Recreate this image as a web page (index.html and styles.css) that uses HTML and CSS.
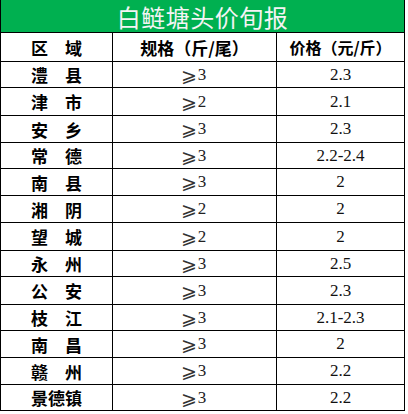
FILE: index.html
```html
<!DOCTYPE html>
<html lang="zh">
<head>
<meta charset="utf-8">
<title>白鲢塘头价旬报</title>
<link rel="stylesheet" href="styles.css">
</head>
<body>
<div class="sheet">
  <div class="title">白鲢塘头价旬报</div>
  <div class="cell head">区　域</div>
  <div class="cell head">规格（斤/尾）</div>
  <div class="cell head small">价格（元/斤）</div>

  <div class="cell area">澧　县</div><div class="cell spec"><span class="ge">⩾</span>3</div><div class="cell price">2.3</div>
  <div class="cell area">津　市</div><div class="cell spec"><span class="ge">⩾</span>2</div><div class="cell price">2.1</div>
  <div class="cell area">安　乡</div><div class="cell spec"><span class="ge">⩾</span>3</div><div class="cell price">2.3</div>
  <div class="cell area">常　德</div><div class="cell spec"><span class="ge">⩾</span>3</div><div class="cell price">2.2-2.4</div>
  <div class="cell area">南　县</div><div class="cell spec"><span class="ge">⩾</span>3</div><div class="cell price">2</div>
  <div class="cell area">湘　阴</div><div class="cell spec"><span class="ge">⩾</span>2</div><div class="cell price">2</div>
  <div class="cell area">望　城</div><div class="cell spec"><span class="ge">⩾</span>2</div><div class="cell price">2</div>
  <div class="cell area">永　州</div><div class="cell spec"><span class="ge">⩾</span>3</div><div class="cell price">2.5</div>
  <div class="cell area">公　安</div><div class="cell spec"><span class="ge">⩾</span>3</div><div class="cell price">2.3</div>
  <div class="cell area">枝　江</div><div class="cell spec"><span class="ge">⩾</span>3</div><div class="cell price">2.1-2.3</div>
  <div class="cell area">南　昌</div><div class="cell spec"><span class="ge">⩾</span>3</div><div class="cell price">2</div>
  <div class="cell area">赣　州</div><div class="cell spec"><span class="ge">⩾</span>3</div><div class="cell price">2.2</div>
  <div class="cell area">景德镇</div><div class="cell spec"><span class="ge">⩾</span>3</div><div class="cell price">2.2</div>
</div>
</body>
</html>
```

FILE: styles.css
```css
html, body {
  margin: 0;
  padding: 0;
  background: #ffffff;
}

.sheet {
  width: 403px;
  display: grid;
  grid-template-columns: 111px 163px 127px;
  grid-template-rows: 32px 28px 25px 27px 26px 25px 26px 26px 27px 25px 27px 25px 26px 26px 25px;
  gap: 1px;
  padding: 0 1px 1px 1px;
  background: #000000;
}

.title {
  grid-column: 1 / 4;
  background: #00b050;
  color: #f4f4f4;
  font-family: "Noto Sans CJK SC", sans-serif;
  font-size: 24px;
  font-weight: 400;
  display: flex;
  align-items: center;
  justify-content: center;
  letter-spacing: 0.5px;
}

.cell {
  background: #ffffff;
  display: flex;
  align-items: center;
  justify-content: center;
  color: #000000;
}

.head {
  font-family: "Noto Sans CJK SC", sans-serif;
  font-size: 17px;
  font-weight: 700;
}

.head.small {
  font-size: 16px;
}

.area {
  font-family: "Noto Sans CJK SC", sans-serif;
  font-size: 17px;
  font-weight: 700;
}

.spec {
  font-family: "Liberation Serif", "DejaVu Serif", serif;
  font-size: 17px;
  color: #222222;
  padding-right: 2px;
}

.ge {
  font-family: "DejaVu Sans", serif;
  font-size: 19px;
  font-weight: 300;
  color: #333333;
  margin-right: 1px;
}

.price {
  font-family: "Liberation Serif", serif;
  font-size: 17px;
  color: #111111;
}
```
